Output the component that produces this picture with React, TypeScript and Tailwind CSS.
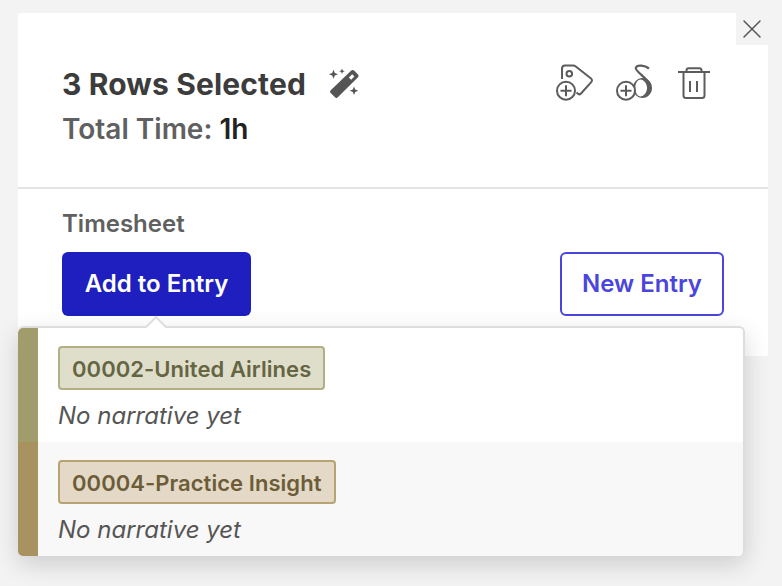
import { X } from 'lucide-react'

const rows = [
  { code: '00002-United Airlines', bar: 'bg-[#a09c6c]', tag: 'bg-[#dfdeca] border-[#b3af83] text-[#656543]', row: 'bg-white' },
  { code: '00004-Practice Insight', bar: 'bg-[#a8925f]', tag: 'bg-[#e3d9c6] border-[#b7a473] text-[#6c5d38]', row: 'bg-[#f8f8f8]' },
]

function PlusBadge({ cx, cy }: { cx: number; cy: number }) {
  return (
    <g>
      <circle cx={cx} cy={cy} r="9" fill="#fff" stroke="#5c5c5c" strokeWidth="2" />
      <path d={`M${cx - 5.5} ${cy}h11M${cx} ${cy - 5.5}v11`} stroke="#5c5c5c" strokeWidth="2" fill="none" />
    </g>
  )
}

function TagPlusIcon() {
  return (
    <svg width="38" height="38" viewBox="0 0 38 38" fill="none">
      <path
        d="M6 15V5C6 2.800 7 1.600 9 1.600h8c1.200 0 2 .3 2.800 1L35 14.500c1.300 1.100 1.300 2.500.2 3.600L25 29.500c-1 1-2.300 1-3.300.1L20.500 28.500"
        stroke="#5c5c5c"
        strokeWidth="2"
      />
      <circle cx="13.300" cy="9.800" r="2.800" stroke="#5c5c5c" strokeWidth="2" />
      <PlusBadge cx={10} cy={26.700} />
    </svg>
  )
}

function DeltaPlusIcon() {
  return (
    <svg width="38" height="38" viewBox="0 0 38 38" fill="none">
      <path d="M33 4.500C29 1.500 21 .3 19.800 3.800 18.800 7 31 14 34.500 21" stroke="#5c5c5c" strokeWidth="2.200" />
      <path
        d="M26.500 14c5.300 0 9.500 4.500 9.500 10s-4.200 10-9.500 10-9.500-4.500-9.500-10 4.200-10 9.500-10zM24.500 15.500c-3 0-5.200 3.800-5.200 8.500s2.200 8.500 5.200 8.500 6.500-3.800 6.500-8.500-3.500-8.500-6.500-8.500z"
        fill="#5c5c5c"
        fillRule="evenodd"
      />
      <PlusBadge cx={10} cy={26.700} />
    </svg>
  )
}

function TrashIcon() {
  return (
    <svg className="ml-[2px]" width="32" height="36" viewBox="0 0 32 36" fill="none" stroke="#5c5c5c" strokeWidth="2">
      <path d="M0 8h32" />
      <path d="M8.500 8V6.500C8.500 5 9.300 4.200 10.800 4.200h10.400c1.500 0 2.300.8 2.300 2.300V8" />
      <path d="M5.500 8v23.500c0 1.700 .9 2.500 2.500 2.500h16c1.600 0 2.500-.8 2.500-2.500V8" />
      <path d="M12 17v11M19 17v11" />
    </svg>
  )
}

function WandIcon() {
  return (
    <svg width="32" height="32" viewBox="0 0 32 32" fill="#555">
      <path d="M23.300 2.500c.8-.8 2-.8 2.800 0l3.900 3.900c.8.8.8 2 0 2.800L9.800 29.300c-.8.8-2 .8-2.800 0L2.700 25c-.8-.8-.8-2 0-2.800L23.300 2.500zM24.200 6.300l-3.300 3.300 2.200 2.200 3.300-3.300-2.200-2.200z" fillRule="evenodd" />
      <path d="M5.500 1.800l1.300 3.200 3.200 1.300-3.200 1.300-1.300 3.200-1.300-3.200L1 6.300 4.200 5zM14 .5l.8 2 2 .8-2 .8-.8 2-.8-2-2-.8 2-.8zM26 18.500l1.200 3 3 1.200-3 1.200-1.200 3-1.200-3-3-1.200 3-1.200z" />
    </svg>
  )
}

export default function App() {
  return (
    <div className="w-[782px] h-[586px] overflow-hidden bg-[#f3f3f3] pl-[18px] pr-[14px] pt-[13px] font-['Inter',sans-serif]">
      <div className="relative h-[343px] bg-white rounded-[2px]">
        <button className="absolute top-0 right-0 w-[32px] h-[32px] bg-[#f3f3f3] flex items-center justify-center text-[#555]">
          <X size={32} strokeWidth={1.1} />
        </button>

        {/* Header */}
        <div className="h-[176px] border-b-2 border-[#e4e4e4] pl-[44px] pr-[58px] pt-[51px] flex justify-between items-start">
          <div className="pt-[1px]">
            <div className="flex items-center gap-[22px] h-[38px]">
              <h1 className="text-[30px] leading-[38px] font-bold text-[#3c3c3c] tracking-[0.14px]">3 Rows Selected</h1>
              <WandIcon />
            </div>
            <p className="mt-[9px] text-[28px] leading-[34px] font-semibold text-[#606060]">
              Total Time: <span className="text-[#222]">1h</span>
            </p>
          </div>
          <div className="flex items-start gap-[22px]">
            <TagPlusIcon />
            <DeltaPlusIcon />
            <TrashIcon />
          </div>
        </div>

        {/* Timesheet */}
        <div className="pl-[44px] pr-[44px] pt-[21px]">
          <p className="text-[24px] leading-[28px] font-semibold text-[#606060]">Timesheet</p>
          <div className="mt-[14px] flex justify-between">
            <button className="w-[189px] h-[64px] rounded-[6px] bg-[#1f1fbf] text-white text-[24px] font-semibold">Add to Entry</button>
            <button className="w-[164px] h-[64px] rounded-[6px] border-2 border-[#4a45dc] bg-white text-[#4a45dc] text-[24px] font-semibold">New Entry</button>
          </div>
        </div>

        {/* Entry picker */}
        <div className="absolute left-0 top-[313px] w-[727px] rounded-[6px] border-t-2 border-r-2 border-[#dddddd] bg-white shadow-[0_8px_24px_rgba(0,0,0,0.16)]">
          <div className="absolute left-[130px] top-[-9px] w-[16px] h-[16px] rotate-45 bg-white border-t-2 border-l-2 border-[#dddddd]" />
          <div className="relative overflow-hidden rounded-[5px]">
            {rows.map(r => (
              <div key={r.code} className={`flex h-[114px] ${r.row}`}>
                <div className={`w-[20px] ${r.bar}`} />
                <div className="pl-[20px] pt-[18px]">
                  <span className={`inline-block h-[44px] pl-[12px] pr-[12px] rounded-[4px] border-2 text-[22px] leading-[42px] font-semibold tracking-[0.05px] whitespace-nowrap ${r.tag}`}>{r.code}</span>
                  <p className="mt-[11px] text-[24px] leading-[30px] italic text-[#555]">No narrative yet</p>
                </div>
              </div>
            ))}
          </div>
        </div>
      </div>
    </div>
  )
}
